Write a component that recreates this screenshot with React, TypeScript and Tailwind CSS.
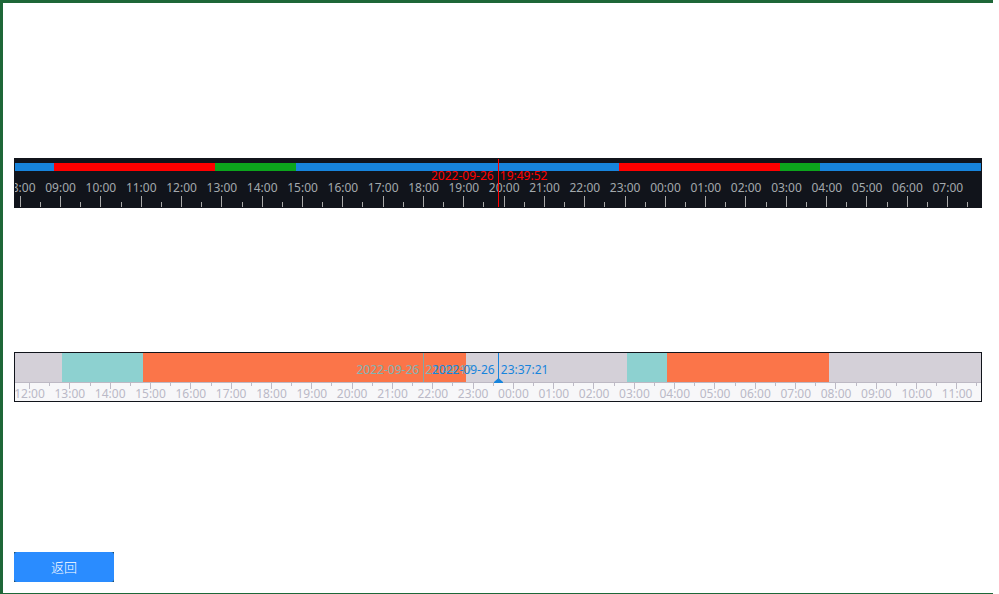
import React from "react";

type Segment = { color: string; minutes: number };

type Mark = { hour: number; label: string };

// Hours visible across the full width of a timeline.
const SPAN = 23.95;
const HOUR = 100 / SPAN;

function hourMarks(first: number): Mark[] {
  return Array.from({ length: 24 }, (_, i) => {
    const hour = (first + i) % 24;
    return { hour: i, label: `${String(hour).padStart(2, "0")}:00` };
  });
}

function Segments({ items, className }: { items: Segment[]; className: string }) {
  return (
    <div className={`flex ${className}`}>
      {items.map((s, i) => (
        <div key={i} className={`basis-0 ${s.color}`} style={{ flexGrow: s.minutes }} />
      ))}
    </div>
  );
}

function Labels({ first, offset, className }: { first: number; offset: number; className: string }) {
  return (
    <div className={`flex overflow-hidden text-xs leading-4 ${className}`}>
      {hourMarks(first).map((m, i) => (
        <span
          key={m.hour}
          className="shrink-0 text-center whitespace-nowrap"
          style={{ width: `${HOUR}%`, marginLeft: i === 0 ? `${(offset - 0.5) * HOUR}%` : undefined }}
        >
          {m.label}
        </span>
      ))}
    </div>
  );
}

function Ticks({
  offset,
  major,
  minor,
  className,
}: {
  offset: number;
  major: string;
  minor: string;
  className: string;
}) {
  return (
    <div className={`flex overflow-hidden ${className}`}>
      {Array.from({ length: 48 }, (_, i) => (
        <div
          key={i}
          className={`shrink-0 border-l ${i % 2 === 0 ? major : minor}`}
          style={{ width: `${HOUR / 2}%`, marginLeft: i === 0 ? `${offset * HOUR}%` : undefined }}
        />
      ))}
    </div>
  );
}

// Date to the left of a cursor line, time to its right.
function Stamp({ date, time, className }: { date: string; time: string; className: string }) {
  return (
    <time className={`absolute top-[9px] -ml-[67px] text-xs leading-4 whitespace-nowrap ${className}`}>
      {date} <span className="pl-[3px]">{time}</span>
    </time>
  );
}

const recordSegments: Segment[] = [
  { color: "bg-[#1784dc]", minutes: 39 },
  { color: "bg-[#ff0000]", minutes: 161 },
  { color: "bg-[#0ca51c]", minutes: 81 },
  { color: "bg-[#1784dc]", minutes: 323 },
  { color: "bg-[#ff0000]", minutes: 161 },
  { color: "bg-[#0ca51c]", minutes: 40 },
  { color: "bg-[#1784dc]", minutes: 161 },
];

const playSegments: Segment[] = [
  { color: "bg-[#d4d0d8]", minutes: 47 },
  { color: "bg-[#8dd1d0]", minutes: 81 },
  { color: "bg-[#fb7549]", minutes: 323 },
  { color: "bg-[#d4d0d8]", minutes: 161 },
  { color: "bg-[#8dd1d0]", minutes: 40 },
  { color: "bg-[#fb7549]", minutes: 162 },
  { color: "bg-[#d4d0d8]", minutes: 152 },
];

function DarkTimeline() {
  return (
    <section className="relative h-[50px] border border-[#11141b] bg-[#11141b]">
      <Segments items={recordSegments} className="mt-1 h-2" />
      <Labels first={8} offset={0.13} className="mt-[9px] text-[#a3a9ad]" />
      <Ticks
        offset={0.12}
        className="h-[11px] items-end"
        major="h-[11px] border-[#a9a9a9]"
        minor="h-[5px] border-[#a9a9a9]"
      />
      <Stamp date="2022-09-26" time="19:49:52" className="left-1/2 text-[#ff0000]" />
      <div className="absolute inset-y-0 left-1/2 w-px bg-[#ff0000]" />
    </section>
  );
}

function LightTimeline() {
  return (
    <section className="relative h-[50px] border border-[#11141b] bg-[#f7f7f9]">
      <Segments items={playSegments} className="h-[29px]" />
      <div className="h-px bg-[#bdb9c4]" />
      <Ticks
        offset={0.35}
        className="h-[6px] items-start"
        major="h-[6px] border-[#bdbac6]"
        minor="h-[3px] border-[#bdbac6]"
      />
      <Labels first={12} offset={0.36} className="-mt-[3px] text-[#bab9c7]" />
      <div className="absolute top-0 h-[29px] border-l border-[#7fa9a8]" style={{ left: `${(407.5 / 966) * 100}%` }}>
        <Stamp date="2022-09-26" time="21:44:17" className="left-0 text-[#80b4b4]" />
      </div>
      <div className="absolute top-0 left-1/2 h-[29px] border-l border-[#1784dc]">
        <Stamp date="2022-09-26" time="23:37:21" className="left-0 text-[#1784dc]" />
        <svg className="absolute -bottom-px -left-[5px]" width="9" height="5" viewBox="0 0 9 5" aria-hidden="true">
          <path d="M4.5 0 L9 4 V5 H0 V4 Z" fill="#1784dc" />
        </svg>
      </div>
    </section>
  );
}

export default function App() {
  return (
    <div className="min-h-screen bg-white pr-1.5 font-['Noto_Sans','Noto_Sans_CJK_SC',sans-serif]">
      <main className="flex min-h-screen flex-col border-t-3 border-b border-l-3 border-[#1e6738] px-[11px] pt-[155px] pb-[11px]">
        <DarkTimeline />
        <div className="mt-36">
          <LightTimeline />
        </div>
        <div className="mt-auto w-[100px] bg-[#1e4a5c]">
          <button
            type="button"
            className="block h-[30px] w-full rounded-[3px] bg-[#2a8cff] text-[13px] leading-5 font-light text-white"
          >
            返回
          </button>
        </div>
      </main>
    </div>
  );
}
